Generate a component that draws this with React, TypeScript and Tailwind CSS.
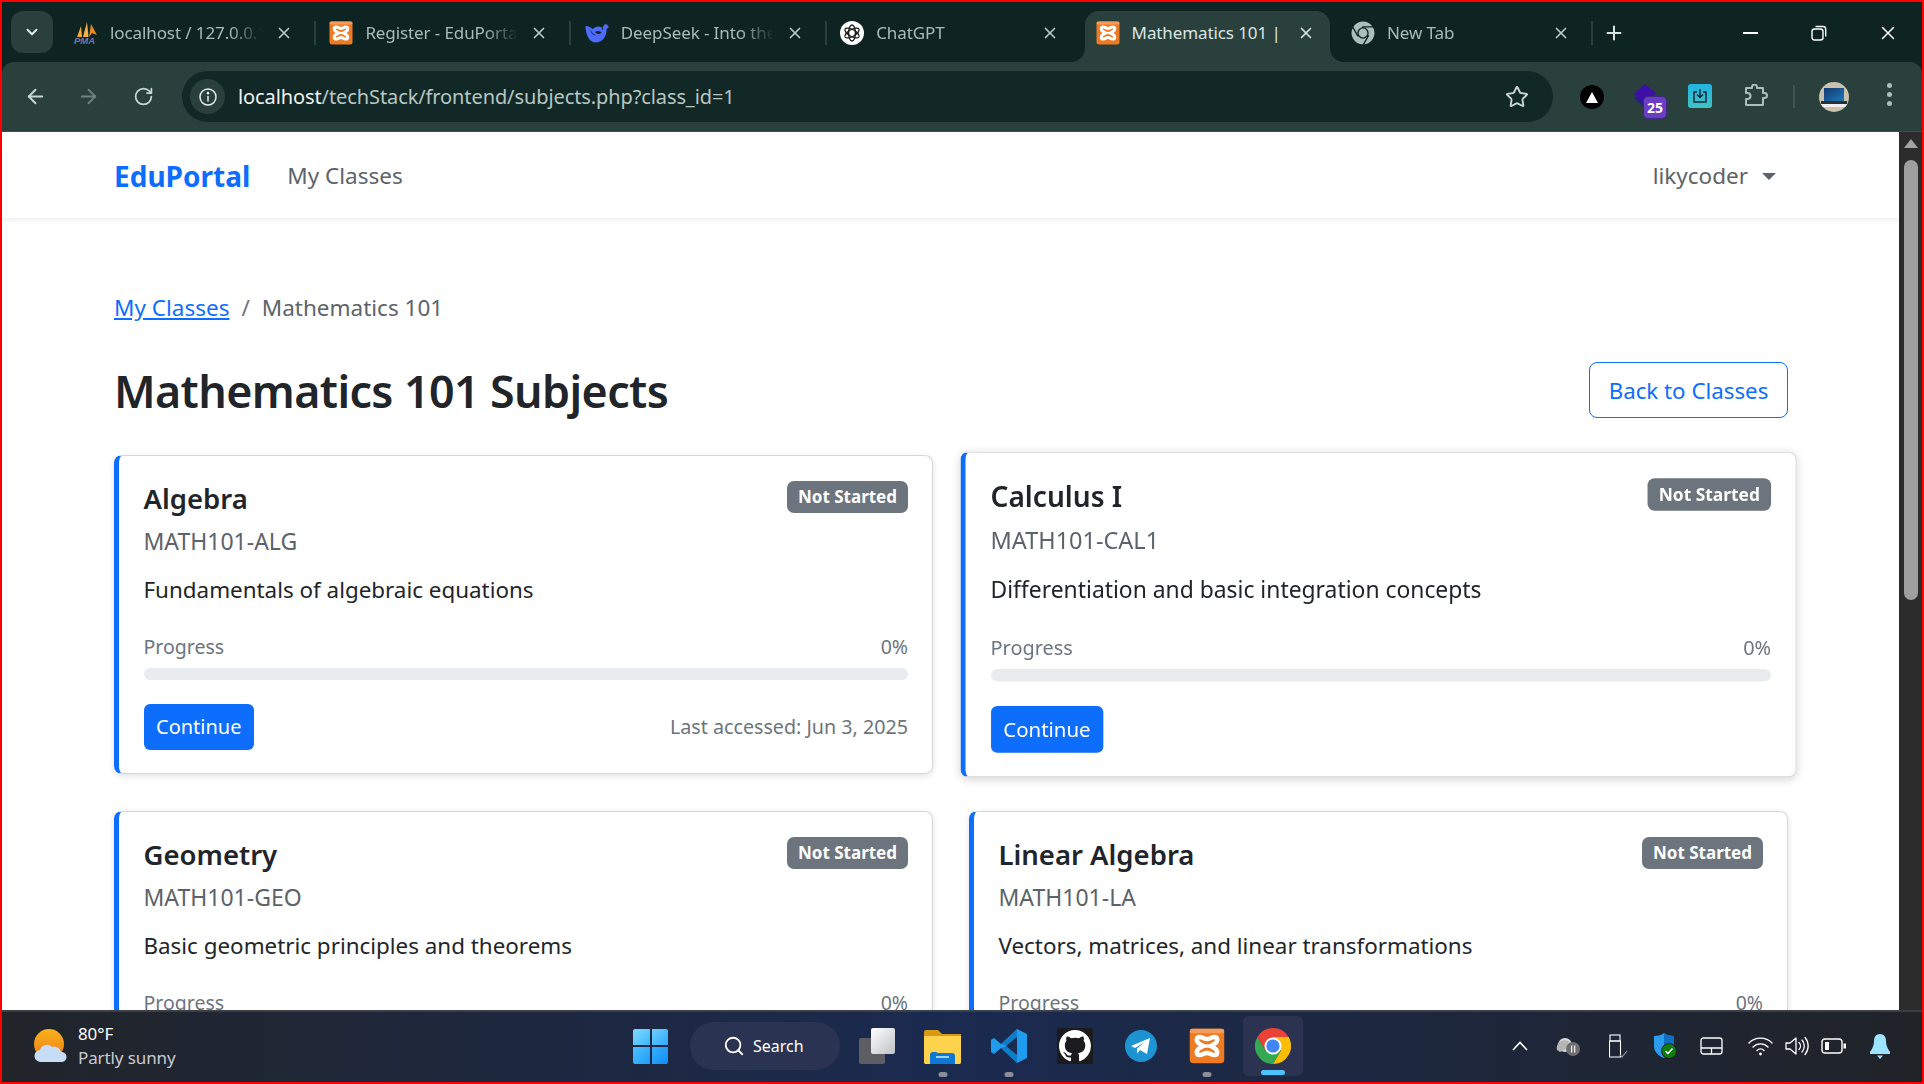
import React from "react";
import { ArrowLeft, ArrowRight, RotateCw, Star, X, Plus, ChevronDown, Search } from "lucide-react";

const Xampp = ({ size = 24 }: { size?: number }) => (
  <svg width={size} height={size} viewBox="0 0 24 24" className="shrink-0">
    <rect x="0.5" y="0.5" width="23" height="23" rx="2.5" fill="#ee7a22" />
    <rect x="0.5" y="0.5" width="23" height="3" rx="1.5" fill="#f59c5a" />
    <path d="M7 6C4.8 6 4.5 9 6.8 10.4L9.5 12L6.8 13.6C4.5 15 4.8 18 7 18C9 18 10 16.6 12 16.6C14 16.6 15 18 17 18C19.2 18 19.5 15 17.2 13.6L14.5 12L17.2 10.4C19.5 9 19.2 6 17 6C15 6 14 7.4 12 7.4C10 7.4 9 6 7 6Z" fill="none" stroke="#fff" strokeWidth="3" />
    <path d="M8 12H16" stroke="#fff" strokeWidth="2.2" />
  </svg>
);

const Pma = () => (
  <svg width="24" height="24" viewBox="0 0 24 24" className="shrink-0">
    <path d="M3 16L7 5L8 16Z" fill="#f5a83a" />
    <path d="M9 16L13 1L14.5 16Z" fill="#f7b04a" />
    <path d="M15 16L17 3L23 14L18 12Z" fill="#e98a1e" />
    <text x="0" y="23" fontSize="9.5" fontWeight="800" fontStyle="italic" fontFamily="Liberation Sans, sans-serif" fill="#6f78b5">PMA</text>
  </svg>
);

const Whale = () => (
  <svg width="24" height="24" viewBox="0 0 24 24" className="shrink-0">
    <path d="M0.5 5C3 4.5 5.5 6.5 8 8C11 4.5 15 5 17.5 7C18.5 5 19 4 21 2.5C21 4 24 4 23.5 6.5C22.5 7.5 21.5 7.5 21.5 9C21.5 16 17 21.5 10.5 21.5C4 21.5 0.5 13 0.5 5Z" fill="#4d6bfe" />
    <path d="M5 8.5C6.5 11 8.5 13 11 14.5C8.5 14.5 6 12 5 8.5Z" fill="#0d2422" />
    <path d="M10 11C12 9.5 14.5 9.5 16.5 11.5C15 13.5 12 13.5 10 11Z" fill="#0d2422" />
    <circle cx="17.5" cy="8" r="0.8" fill="#0d2422" />
  </svg>
);

const Gpt = () => (
  <svg width="24" height="24" viewBox="0 0 24 24" className="shrink-0">
    <circle cx="12" cy="12" r="12" fill="#fff" />
    {[0, 60, 120].map((a) => (
      <g key={a} transform={`rotate(${a} 12 12)`}>
        <ellipse cx="12" cy="12" rx="3.4" ry="8" fill="none" stroke="#1c1c1c" strokeWidth="1.3" />
      </g>
    ))}
  </svg>
);

const ChromeLogo = ({ size, a, b, c, hub, ring, gap }: { size: number; a: string; b: string; c: string; hub: string; ring: string; gap?: string }) => {
  const p = "M12 6H22.4A12 12 0 0 0 1.6 6L6.8 15L12 12Z";
  return (
    <svg width={size} height={size} viewBox="0 0 24 24" className="shrink-0">
      <path d={p} fill={a} stroke={gap} strokeWidth={gap ? 1.2 : 0} />
      <path d={p} fill={b} stroke={gap} strokeWidth={gap ? 1.2 : 0} transform="rotate(120 12 12)" />
      <path d={p} fill={c} stroke={gap} strokeWidth={gap ? 1.2 : 0} transform="rotate(240 12 12)" />
      <circle cx="12" cy="12" r="5.7" fill={ring} />
      <circle cx="12" cy="12" r="4.4" fill={hub} />
    </svg>
  );
};

function Tab({ icon, title, active, sep }: { icon: React.ReactNode; title: string; active?: boolean; sep?: boolean }) {
  return (
    <div className="relative flex h-[51px] w-[255.4px] shrink-0 items-center pb-[7px]">
      {active && (
        <div className="absolute inset-y-0 left-0 right-[10px] rounded-t-[14px] bg-[#2a403d]">
          <svg width="14" height="14" viewBox="0 0 14 14" className="absolute bottom-0 left-[-14px]">
            <path d="M14 0V14H0A14 14 0 0 0 14 0Z" fill="#2a403d" />
          </svg>
          <svg width="14" height="14" viewBox="0 0 14 14" className="absolute bottom-0 right-[-14px]">
            <path d="M0 0V14H14A14 14 0 0 1 0 0Z" fill="#2a403d" />
          </svg>
        </div>
      )}
      <div className="relative ml-[11px] flex w-[24px] shrink-0 justify-center">{icon}</div>
      <div
        className={`relative ml-[12px] w-[153px] shrink-0 overflow-hidden whitespace-nowrap text-[17px] tracking-[-0.1px] ${
          active ? "text-[#dbe6e3]" : "text-[#a9bdb8] [mask-image:linear-gradient(90deg,#000_78%,transparent)]"
        }`}
      >
        {title}
      </div>
      <div className="relative ml-[11px] flex w-[20px] shrink-0 justify-center">
        <X size={18} strokeWidth={2.2} className={active ? "text-[#dbe6e3]" : "text-[#b9cbc6]"} />
      </div>
      {sep && <div className="ml-[20px] h-[24px] w-[2px] shrink-0 bg-[#2a403d]" />}
    </div>
  );
}

function TabStrip() {
  return (
    <div className="flex h-[60px] shrink-0 items-start bg-[#0d2422]">
      <div className="ml-[9px] mt-[9px] flex h-[42px] w-[42px] shrink-0 items-center justify-center rounded-[12px] bg-[#2a403d]">
        <ChevronDown size={18} strokeWidth={2.6} className="text-[#e3ecea]" />
      </div>
      <div className="ml-[10px] mt-[9px] flex">
        <Tab icon={<Pma />} title="localhost / 127.0.0.1" sep />
        <Tab icon={<Xampp />} title="Register - EduPortal" sep />
        <Tab icon={<Whale />} title="DeepSeek - Into the Unknown" sep />
        <Tab icon={<Gpt />} title="ChatGPT" />
        <Tab icon={<Xampp />} title="Mathematics 101 | EduPortal" active />
        <Tab
          icon={<ChromeLogo size={24} a="#a9bfba" b="#a9bfba" c="#a9bfba" hub="#a9bfba" ring="#0d2422" gap="#0d2422" />}
          title="New Tab"
          sep
        />
      </div>
      <div className="ml-[8px] mt-[20px] flex w-[22px] justify-center">
        <Plus size={22} strokeWidth={2.2} className="text-[#dbe6e3]" />
      </div>
      <div className="ml-[118px] mt-[30px] h-[2px] w-[15px] bg-white" />
      <div className="ml-[52px] mt-[22px] flex h-[18px] w-[18px] items-center justify-center">
        <svg width="16" height="16" viewBox="0 0 16 16" fill="none" stroke="#fff" strokeWidth="1.4">
          <rect x="1" y="4" width="11" height="11" rx="2.5" />
          <path d="M4.5 1.5H12A2.7 2.7 0 0 1 14.7 4.2V11.5" />
        </svg>
      </div>
      <div className="ml-[49px] mt-[19px] flex w-[22px] justify-center">
        <X size={24} strokeWidth={1.6} className="text-white" />
      </div>
    </div>
  );
}

function Toolbar() {
  return (
    <div className="flex h-[70px] shrink-0 items-start rounded-t-[12px] border-b border-[#3a4f4c] bg-[#2a403d]">
      <div className="ml-[11px] mt-[9px] flex h-[51px] w-[44px] items-center justify-center">
        <ArrowLeft size={23} strokeWidth={2} className="text-[#c9d6d2]" />
      </div>
      <div className="ml-[9px] mt-[9px] flex h-[51px] w-[44px] items-center justify-center">
        <ArrowRight size={23} strokeWidth={2} className="text-[#6d827e]" />
      </div>
      <div className="ml-[11px] mt-[9px] flex h-[51px] w-[44px] items-center justify-center">
        <RotateCw size={21} strokeWidth={2} className="text-[#c9d6d2]" />
      </div>
      <div className="ml-[17px] mt-[9px] flex h-[51px] w-[1371px] items-center rounded-full bg-[#122826]">
        <div className="ml-[8px] flex h-[35px] w-[35px] items-center justify-center rounded-full bg-[#2a403d]">
          <svg width="20" height="20" viewBox="0 0 20 20" fill="none" stroke="#e6eeec" strokeWidth="1.5">
            <circle cx="10" cy="10" r="8" />
            <path d="M10 9V14.5" />
            <circle cx="10" cy="6.2" r="0.6" fill="#e6eeec" />
          </svg>
        </div>
        <div className="ml-[13px] whitespace-nowrap text-[20px] tracking-[-0.1px] text-[#b7c7c3]">
          <span className="text-[#eef4f2]">localhost</span>/techStack/frontend/subjects.php?class_id=1
        </div>
        <div className="ml-auto mr-[24px]">
          <Star size={24} strokeWidth={1.9} className="text-[#c9d6d2]" />
        </div>
      </div>
      <div className="ml-[27px] mt-[23px] flex h-[24px] w-[24px] items-center justify-center rounded-full bg-black">
        <svg width="12" height="11" viewBox="0 0 12 11"><path d="M6 0L12 11H0Z" fill="#fff" /></svg>
      </div>
      <div className="relative ml-[28px] mt-[22px] h-[36px] w-[36px]">
        <svg width="26" height="24" viewBox="0 0 26 24" className="absolute left-0 top-0">
          <path d="M2 14L13 5L25 14L13 24Z" fill="#2a1a8c" />
          <path d="M2 10L13 0L24 9L13 19Z" fill="#3d0fa8" />
        </svg>
        <div className="absolute left-[11px] top-[12px] flex h-[23px] w-[24px] items-center justify-center rounded-[5px] border border-[#3f2a83] bg-[#6a3dc4] text-[14px] font-bold text-white">
          25
        </div>
      </div>
      <div className="ml-[20px] mt-[22px] flex h-[24px] w-[24px] items-center justify-center rounded-[3px] bg-gradient-to-b from-[#1fb4e4] to-[#3fc4c4]">
        <svg width="16" height="16" viewBox="0 0 16 16" fill="none" stroke="#123" strokeWidth="1.4">
          <path d="M5 4H2V14H14V4H11" />
          <path d="M8 1V9M5 6.5L8 9.5L11 6.5" />
        </svg>
      </div>
      <div className="ml-[32px] mt-[22px]">
        <svg width="24" height="24" viewBox="0 0 24 24" fill="none" stroke="#a9bfba" strokeWidth="2" strokeLinejoin="round">
          <path d="M2 4H8V3A2.5 2.5 0 0 1 13 3V4H19V9H20.5A2.5 2.5 0 0 1 20.5 14H19V21H2V15H3.5A3 3 0 0 0 3.5 9H2Z" />
        </svg>
      </div>
      <div className="ml-[25px] mt-[23px] h-[23px] w-[2px] bg-[#3f5552]" />
      <div className="ml-[24px] mt-[20px] flex h-[30px] w-[30px] flex-col items-center justify-center overflow-hidden rounded-full bg-[#c9c2ae]">
        <div className="h-[13px] w-[20px] bg-gradient-to-br from-[#123a6e] to-[#1f78bd]" />
        <div className="h-[3px] w-[26px] bg-[#2b2f33]" />
        <div className="h-[3px] w-[30px] bg-[#eef0f0]" />
      </div>
      <div className="ml-[28px] mt-[21px] flex w-[24px] flex-col items-center gap-[4px]">
        <div className="h-[5px] w-[5px] rounded-full bg-[#a9bfba]" />
        <div className="h-[5px] w-[5px] rounded-full bg-[#a9bfba]" />
        <div className="h-[5px] w-[5px] rounded-full bg-[#a9bfba]" />
      </div>
    </div>
  );
}

function Card({ title, code, desc, last, hover }: { title: string; code: string; desc: string; last?: string; hover?: boolean }) {
  return (
    <div
      className={`rounded-[8px] border border-l-[5px] border-[#d5d8db] border-l-[#0d6efd] bg-white pb-[23px] pl-[24.5px] pr-[24px] pt-[25px] ${
        hover ? "z-10 scale-[1.021] shadow-[0_2px_8px_rgba(0,0,0,0.16)]" : "shadow-[0_2px_6px_rgba(0,0,0,0.12)]"
      }`}
    >
      <div className="flex items-start justify-between">
        <div className="mt-[3px] text-[27.5px] font-semibold leading-[30px] text-[#212529]">{title}</div>
        <div className="flex h-[32px] w-[121px] items-center justify-center rounded-[7px] bg-[#6c757d] text-[17px] font-bold text-white">
          Not Started
        </div>
      </div>
      <div className="mt-[12px] text-[23px] leading-[30px] text-[#5c636a]">{code}</div>
      <div className="mt-[19px] text-[22.4px] leading-[30px] text-[#212529]">{desc}</div>
      <div className="mt-[27px] flex justify-between text-[19.5px] leading-[30px] text-[#6c757d]">
        <span>Progress</span>
        <span>0%</span>
      </div>
      <div className="mt-[6px] h-[12px] rounded-[6px] bg-[#e9ecef]" />
      <div className="mt-[24px] flex items-center justify-between">
        <div className="flex h-[46px] items-center rounded-[6px] bg-[#0d6efd] px-[12.5px] text-[20px] text-white">Continue</div>
        {last && <span className="text-[19.7px] text-[#6c757d]">{last}</span>}
      </div>
    </div>
  );
}

function Page() {
  return (
    <div className="min-w-0 flex-1 overflow-hidden bg-white">
      <div className="flex h-[86px] items-center bg-white pl-[112px] pr-[123px] pt-[2px] shadow-[0_2px_5px_rgba(0,0,0,0.08)]">
        <span className="text-[28px] font-bold text-[#0d6efd]">EduPortal</span>
        <span className="ml-[37px] text-[22.5px] text-[#5c636a]">My Classes</span>
        <div className="ml-auto flex items-center">
          <span className="text-[22.5px] text-[#5c636a]">likycoder</span>
          <div className="ml-[14px] h-0 w-0 border-x-[7px] border-t-[7px] border-x-transparent border-t-[#5c636a]" />
        </div>
      </div>
      <div className="pl-[112px] pr-[111px]">
        <div className="mt-[75px] flex h-[30px] items-center text-[22.5px]">
          <span className="text-[#0d6efd] underline">My Classes</span>
          <span className="mx-[12px] text-[#6c757d]">/</span>
          <span className="text-[#5c636a]">Mathematics 101</span>
        </div>
        <div className="mt-[39px] flex h-[56px] items-center justify-between">
          <div className="pt-[2px] text-[44.8px] font-semibold tracking-[-0.6px] text-[#212529]">Mathematics 101 Subjects</div>
          <div className="flex h-[56px] w-[199px] items-center justify-center rounded-[8px] border border-[#0d6efd] pt-[2px] text-[22.3px] text-[#0d6efd]">
            Back to Classes
          </div>
        </div>
        <div className="mt-[37px] grid grid-cols-2 gap-x-[36px] gap-y-[37px]">
          <Card title="Algebra" code="MATH101-ALG" desc="Fundamentals of algebraic equations" last="Last accessed: Jun 3, 2025" />
          <Card title="Calculus I" code="MATH101-CAL1" desc="Differentiation and basic integration concepts" hover />
          <Card title="Geometry" code="MATH101-GEO" desc="Basic geometric principles and theorems" />
          <Card title="Linear Algebra" code="MATH101-LA" desc="Vectors, matrices, and linear transformations" />
        </div>
      </div>
    </div>
  );
}

function Scrollbar() {
  return (
    <div className="flex w-[23px] shrink-0 flex-col items-center bg-[#2c2c2c]">
      <div className="mt-[7px] h-0 w-0 border-x-[7px] border-b-[9px] border-x-transparent border-b-[#a3a3a3]" />
      <div className="mt-[12px] h-[440px] w-[14px] rounded-full bg-[#9f9f9f]" />
    </div>
  );
}

const Dot = () => <div className="absolute bottom-[-13px] left-1/2 h-[5px] w-[9px] -translate-x-1/2 rounded-full bg-[#8b8e96]" />;

function Taskbar() {
  return (
    <div className="flex h-[72px] shrink-0 items-center border-t-2 border-[#3c3f46] bg-gradient-to-r from-[#212429] via-[#1a2a50] via-50% to-[#202328] pb-[2px] text-white">
      <div className="ml-[32px] h-[34px] w-[34px] shrink-0">
        <svg width="34" height="34" viewBox="0 0 34 34">
          <defs>
            <linearGradient id="sun" x1="0" y1="0" x2="0" y2="1">
              <stop offset="0" stopColor="#f9b21c" />
              <stop offset="1" stopColor="#ee7d18" />
            </linearGradient>
          </defs>
          <circle cx="15" cy="15" r="15" fill="url(#sun)" />
          <path d="M7 33A6 6 0 0 1 6 21A7 7 0 0 1 18 18A7 7 0 0 1 27 23A5 5 0 0 1 28 33Z" fill="#c7dcf5" />
        </svg>
      </div>
      <div className="ml-[10px] w-[110px] shrink-0 leading-[24px]">
        <div className="text-[17px] tracking-[-0.1px] text-white">80°F</div>
        <div className="whitespace-nowrap text-[17px] tracking-[-0.1px] text-[#c9ccd1]">Partly sunny</div>
      </div>
      <div className="ml-[445px] grid h-[35px] w-[35px] shrink-0 grid-cols-2 gap-[2px]">
        <div className="rounded-tl-[2px] bg-gradient-to-br from-[#7ddcff] to-[#3cb5fb]" />
        <div className="rounded-tr-[2px] bg-gradient-to-br from-[#6bd0ff] to-[#2aa8fb]" />
        <div className="rounded-bl-[2px] bg-gradient-to-br from-[#4cc2ff] to-[#1b9bfa]" />
        <div className="rounded-br-[2px] bg-gradient-to-br from-[#35b0ff] to-[#0f8cf5]" />
      </div>
      <div className="ml-[22px] flex h-[48px] w-[150px] shrink-0 items-center rounded-full bg-[#2a3352]">
        <Search size={22} strokeWidth={2} className="ml-[33px] text-white" />
        <span className="ml-[8px] text-[16px] text-white">Search</span>
      </div>
      <div className="relative ml-[19px] h-[36px] w-[36px] shrink-0">
        <div className="absolute bottom-0 left-0 h-[26px] w-[26px] rounded-[2px] bg-[#5d5e63]" />
        <div className="absolute right-0 top-0 h-[26px] w-[24px] rounded-[2px] bg-gradient-to-br from-white to-[#bfc2c6]" />
      </div>
      <div className="relative ml-[29px] h-[35px] w-[37px] shrink-0">
        <svg width="37" height="35" viewBox="0 0 37 35">
          <path d="M0 3A2 2 0 0 1 2 1H14L18 5H37V33A2 2 0 0 1 35 35H2A2 2 0 0 1 0 33Z" fill="#d79a12" />
          <path d="M0 7H37V33A2 2 0 0 1 35 35H2A2 2 0 0 1 0 33Z" fill="#ffd24d" />
          <path d="M6 26A3 3 0 0 1 9 23H12L14 24H28A3 3 0 0 1 31 26V35H6Z" fill="#0f78d4" />
          <rect x="12" y="27" width="13" height="2" fill="#9fd4ff" />
        </svg>
        <Dot />
      </div>
      <div className="relative ml-[30px] h-[36px] w-[36px] shrink-0">
        <svg width="36" height="36" viewBox="0 0 36 36">
          <path d="M26 1L36 6V30L26 35L10 20L3 26L0 24V12L3 10L10 16Z" fill="#1f9cf0" />
          <path d="M26 1L26 35L10 20L17 18L10 16Z" fill="#0065a9" opacity="0.55" />
          <path d="M26 9V27L15 18Z" fill="#1a2a50" />
        </svg>
        <Dot />
      </div>
      <div className="ml-[30px] flex h-[36px] w-[36px] shrink-0 items-center justify-center bg-[#1b1b1d]">
        <svg width="32" height="32" viewBox="0 0 16 16" fill="#fff">
          <path d="M8 0C3.58 0 0 3.58 0 8c0 3.54 2.29 6.53 5.47 7.59.4.07.55-.17.55-.38 0-.19-.01-.82-.01-1.49-2.01.37-2.53-.49-2.69-.94-.09-.23-.48-.94-.82-1.13-.28-.15-.68-.52-.01-.53.63-.01 1.08.58 1.23.82.72 1.21 1.87.87 2.33.66.07-.52.28-.87.51-1.07-1.78-.2-3.64-.89-3.64-3.95 0-.87.31-1.59.82-2.15-.08-.2-.36-1.02.08-2.12 0 0 .67-.21 2.2.82.64-.18 1.32-.27 2-.27s1.36.09 2 .27c1.53-1.04 2.2-.82 2.2-.82.44 1.1.16 1.92.08 2.12.51.56.82 1.27.82 2.15 0 3.07-1.87 3.75-3.65 3.95.29.25.54.73.54 1.48 0 1.07-.01 1.93-.01 2.2 0 .21.15.46.55.38A8.01 8.01 0 0 0 16 8c0-4.42-3.58-8-8-8z" />
        </svg>
      </div>
      <div className="ml-[32px] h-[32px] w-[32px] shrink-0">
        <svg width="32" height="32" viewBox="0 0 32 32">
          <circle cx="16" cy="16" r="16" fill="#1d93d2" />
          <path d="M6 16L25 8L22 24L15 20L12 23.5L12 18.5L20 12L10 18Z" fill="#fff" />
        </svg>
      </div>
      <div className="relative ml-[32px] shrink-0">
        <Xampp size={36} />
        <Dot />
      </div>
      <div className="relative ml-[18px] flex h-[60px] w-[60px] shrink-0 items-center justify-center rounded-[6px] bg-[#2c3350]">
        <ChromeLogo size={36} a="#ea4335" b="#fbbc04" c="#34a853" hub="#4285f4" ring="#fff" />
        <div className="absolute bottom-[1px] left-1/2 h-[5px] w-[24px] -translate-x-1/2 rounded-full bg-[#4cc2ff]" />
      </div>
      <div className="ml-[209px] shrink-0">
        <svg width="16" height="10" viewBox="0 0 16 10" fill="none" stroke="#fff" strokeWidth="1.6"><path d="M1 9L8 1.5L15 9" /></svg>
      </div>
      <div className="ml-[28px] shrink-0">
        <svg width="24" height="20" viewBox="0 0 24 20">
          <circle cx="9" cy="9" r="7" fill="#d8d8d8" />
          <path d="M1 14A7 7 0 0 1 16 10L4 16Z" fill="#b5b5b5" />
          <circle cx="17" cy="13" r="7" fill="#6e6e6e" />
          <rect x="15" y="9.5" width="1.3" height="7" fill="#eee" />
          <rect x="18" y="9.5" width="1.3" height="7" fill="#eee" />
        </svg>
      </div>
      <div className="ml-[29px] shrink-0">
        <svg width="19" height="24" viewBox="0 0 19 24" fill="none" stroke="#fff" strokeWidth="1.1">
          <rect x="1" y="1" width="10" height="6" />
          <path d="M0.5 7H11.5V23H0.5Z" />
          <path d="M11 21L13 23L18 17" stroke="#a0a3a8" />
        </svg>
      </div>
      <div className="ml-[25px] shrink-0">
        <svg width="24" height="26" viewBox="0 0 24 26">
          <path d="M1 3C5 3 9 2 11 0C13 2 17 3 21 3V13C21 19 16 23 11 25C6 23 1 19 1 13Z" fill="#2a9df0" />
          <path d="M11 0C13 2 17 3 21 3V13H11Z" fill="#0f6fc4" />
          <circle cx="16" cy="18" r="7.5" fill="#107c10" stroke="#1a1d24" strokeWidth="1" />
          <path d="M12.5 18L15 20.5L19.5 15.5" fill="none" stroke="#fff" strokeWidth="1.4" />
        </svg>
      </div>
      <div className="ml-[23px] shrink-0">
        <svg width="23" height="18" viewBox="0 0 23 18" fill="none" stroke="#fff" strokeWidth="1.3">
          <rect x="1" y="1" width="21" height="16" rx="2.5" />
          <path d="M1 11H22M11.5 11V17" />
        </svg>
      </div>
      <div className="ml-[25px] shrink-0">
        <svg width="25" height="20" viewBox="0 0 25 20" fill="none" stroke="#fff" strokeWidth="1.4" strokeLinecap="round">
          <path d="M1 7A16 16 0 0 1 24 7M5 11A10.5 10.5 0 0 1 20 11M9 14.5A5 5 0 0 1 16 14.5" />
          <circle cx="12.5" cy="18" r="1.4" fill="#fff" stroke="none" />
        </svg>
      </div>
      <div className="ml-[12px] shrink-0">
        <svg width="24" height="20" viewBox="0 0 24 20" fill="none" stroke="#fff" strokeWidth="1.3" strokeLinecap="round" strokeLinejoin="round">
          <path d="M1 7H5L11 2V18L5 13H1Z" />
          <path d="M14 6.5A5 5 0 0 1 14 13.5M17 4A9 9 0 0 1 17 16M20 1.5A13 13 0 0 1 20 18.5" />
        </svg>
      </div>
      <div className="ml-[12px] shrink-0">
        <svg width="25" height="16" viewBox="0 0 25 16" fill="none" stroke="#fff" strokeWidth="1.4">
          <rect x="1" y="1" width="20" height="14" rx="3" />
          <rect x="4" y="4" width="4" height="8" fill="#fff" stroke="none" />
          <rect x="22.5" y="5.5" width="2.5" height="5" fill="#fff" stroke="none" />
        </svg>
      </div>
      <div className="ml-[24px] shrink-0">
        <svg width="20" height="25" viewBox="0 0 20 25">
          <path d="M10 0C14 0 16 3 16 7C16 12 18 15 20 18V20H0V18C2 15 4 12 4 7C4 3 6 0 10 0Z" fill="#9ce4ff" />
          <path d="M7 21.5H13L10 25Z" fill="#9ce4ff" />
        </svg>
      </div>
    </div>
  );
}

export default function App() {
  return (
    <div className="flex h-[1084px] w-[1924px] flex-col overflow-hidden border-y-2 border-l-2 border-r-[2px] border-[#ff0000] bg-[#0d2422] font-['Noto_Sans',sans-serif]">
      <TabStrip />
      <Toolbar />
      <div className="flex min-h-0 flex-1">
        <Page />
        <Scrollbar />
      </div>
      <Taskbar />
    </div>
  );
}
